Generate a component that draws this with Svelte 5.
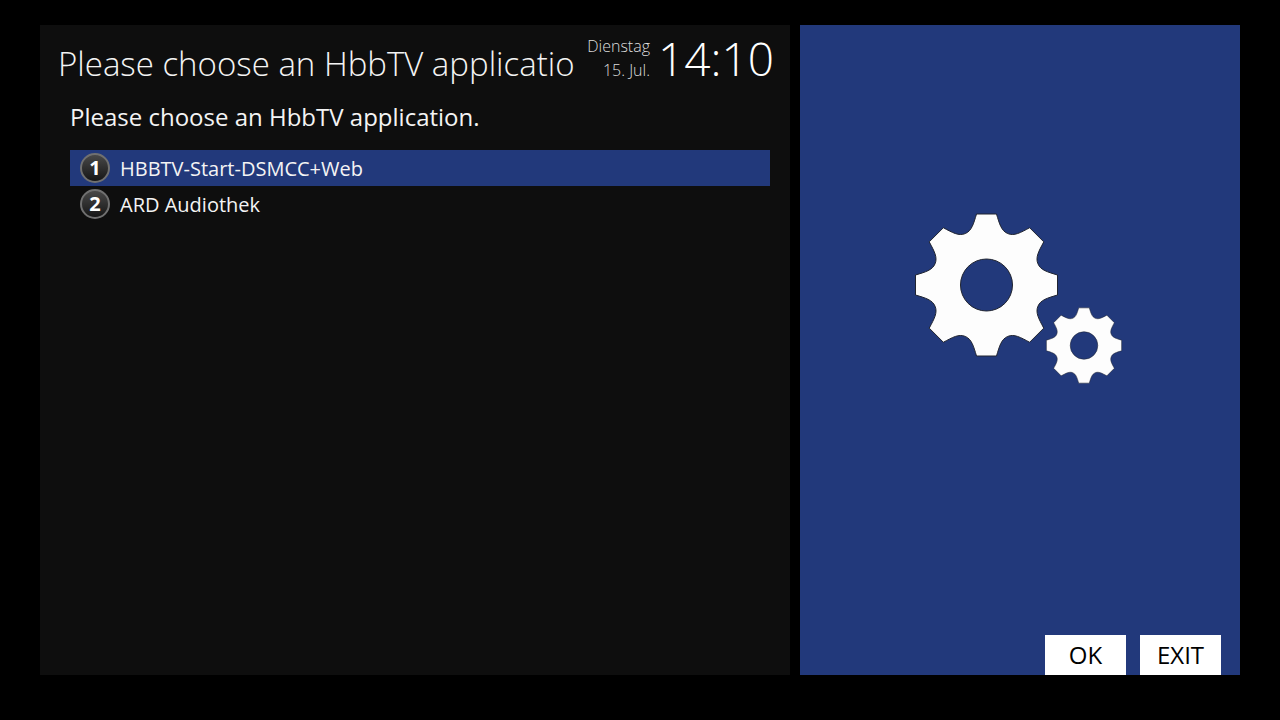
<script lang="ts">
	interface HbbtvApp {
		id: number;
		name: string;
	}

	const apps: HbbtvApp[] = [
		{ id: 1, name: 'HBBTV-Start-DSMCC+Web' },
		{ id: 2, name: 'ARD Audiothek' }
	];

	let selected = $state(1);

	// Outline of an eight-toothed gear, centred on 0,0 with a radius of 71
	function gearPath() {
		const right: [number, number][] = [[10, -71], [13, -61], [14.8, -54.1], [21.3, -51.4]];
		const k = Math.SQRT1_2;
		// the second half of each valley mirrors the first
		const mirrored = right.map(([x, y]) => [k * (-x - y), k * (y - x)] as [number, number]).reverse();
		let d = '';

		for (let i = 0; i < 8; i++) {
			const a = (i * Math.PI) / 4;
			const p = ([x, y]: [number, number]) =>
				`${(x * Math.cos(a) - y * Math.sin(a)).toFixed(2)} ${(x * Math.sin(a) + y * Math.cos(a)).toFixed(2)}`;
			d += `${i ? 'L' : 'M'}${p(right[0])}C${right.slice(1).map(p).join(' ')}`;
			d += `C${mirrored.slice(1).map(p).join(' ')}`;
		}

		return d + 'ZM26 0A26 26 0 1 0 -26 0A26 26 0 1 0 26 0Z';
	}

	const gear = gearPath();
</script>

<div class="screen">
	<main class="panel">
		<header>
			<h1>Please choose an HbbTV applicatio</h1>
			<div class="date">
				<span>Dienstag</span>
				<span>15. Jul.</span>
			</div>
			<time class="clock">14:10</time>
		</header>

		<section class="content">
			<p>Please choose an HbbTV application.</p>
			<ul>
				{#each apps as app (app.id)}
					<li>
						<button class="entry" class:selected={selected === app.id} onclick={() => (selected = app.id)}>
							<span class="key">{app.id}</span>
							<span>{app.name}</span>
						</button>
					</li>
				{/each}
			</ul>
		</section>
	</main>

	<aside>
		<svg class="gears" viewBox="0 0 212 172" aria-hidden="true">
			<path d={gear} transform="translate(72.5 72)" />
			<path d={gear} transform="translate(170 132.5) scale(.53)" />
		</svg>
		<div class="actions">
			<button>OK</button>
			<button>EXIT</button>
		</div>
	</aside>
</div>

<style>
	:global(body) {
		margin: 0;
		background: #000;
	}

	.screen {
		box-sizing: border-box;
		min-height: 100vh;
		padding: 25px 40px 45px;
		display: grid;
		grid-template-columns: 75fr 44fr;
		gap: 10px;
		background: #000;
		color: #fff;
		font-family: 'Open Sans', 'Noto Sans', sans-serif;
	}

	.panel {
		min-width: 0;
		background: #0e0e0e;
	}

	header {
		display: flex;
		align-items: flex-start;
		height: 72px;
		padding: 0 16px 0 18px;
		font-weight: 300;
	}

	h1 {
		flex: 1;
		min-width: 0;
		margin: 0;
		padding-top: 15px;
		white-space: nowrap;
		font-size: 33px;
		font-weight: 300;
		line-height: 48px;
		color: #f4f4f4;
	}

	.date {
		display: flex;
		flex-direction: column;
		padding-top: 9px;
		text-align: right;
		font-size: 16px;
		line-height: 24px;
		color: #ddd;
	}

	.clock {
		padding-left: 8px;
		font-size: 46px;
		line-height: 66px;
	}

	.content {
		padding: 0 20px 0 30px;
	}

	p {
		margin: 0;
		font-size: 24px;
		line-height: 40px;
		color: #f4f4f4;
	}

	ul {
		margin: 13px 0 0;
		padding: 0;
		list-style: none;
	}

	button {
		border: 0;
		border-radius: 0;
		font-family: inherit;
		cursor: pointer;
	}

	.entry {
		display: flex;
		align-items: center;
		gap: 10px;
		width: 100%;
		height: 36px;
		padding: 0 10px;
		background: none;
		color: #f4f4f4;
		font-size: 20px;
		text-align: left;
	}

	.entry.selected {
		background: #22397b;
	}

	.key {
		box-sizing: border-box;
		width: 30px;
		height: 30px;
		border: 2px solid #707070;
		border-radius: 50%;
		background: linear-gradient(#484848, #161616);
		color: #fff;
		font-size: 20px;
		font-weight: 700;
		line-height: 26px;
		text-align: center;
	}

	aside {
		display: flex;
		flex-direction: column;
		align-items: center;
		justify-content: space-between;
		background: #22397b;
	}

	.gears {
		width: 212px;
		margin-top: 188px;
		fill: #fdfdfd;
		fill-rule: evenodd;
		stroke: #202430;
		stroke-width: 1;
	}

	.actions {
		display: flex;
		align-self: flex-end;
		gap: 14px;
		padding-right: 19px;
	}

	.actions button {
		width: 81px;
		height: 40px;
		padding: 0 0 2px;
		background: #fff;
		color: #000;
		font-size: 24px;
	}
</style>
